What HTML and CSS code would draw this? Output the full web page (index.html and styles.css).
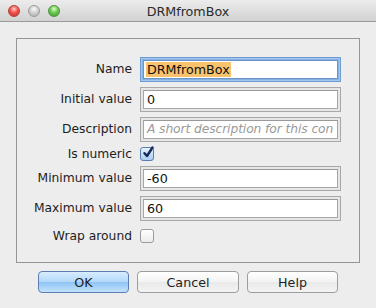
FILE: index.html
```html
<!DOCTYPE html>
<html lang="en">
<head>
  <meta charset="UTF-8" />
  <meta name="viewport" content="width=device-width, initial-scale=1.0" />
  <title>DRMfromBox</title>
  <link rel="stylesheet" href="styles.css">
</head>
<body>
  <div class="window">
    <div class="titlebar">
      <div class="lights">
        <span class="light red"></span>
        <span class="light gray"></span>
        <span class="light green"></span>
      </div>
      <div class="title">DRMfromBox</div>
      <div></div>
    </div>

    <div class="content">
      <div class="panel">
        <div class="form">
          <label class="label">Name</label>
          <div class="field focused"><div class="input"><span class="sel">DRMfromBox</span></div></div>

          <label class="label">Initial value</label>
          <div class="field"><div class="input">0</div></div>

          <label class="label">Description</label>
          <div class="field"><div class="input placeholder">A short description for this con</div></div>

          <label class="label check-label">Is numeric</label>
          <div class="check-cell">
            <span class="checkbox checked">
              <svg width="14" height="14" viewBox="0 0 14 14"><path d="M3.5 7.2 L6 10 L11.5 1.5" fill="none" stroke="#14285a" stroke-width="2.4" stroke-linecap="round" stroke-linejoin="round"/></svg>
            </span>
          </div>

          <label class="label">Minimum value</label>
          <div class="field"><div class="input">-60</div></div>

          <label class="label">Maximum value</label>
          <div class="field"><div class="input">60</div></div>

          <label class="label check-label wrap">Wrap around</label>
          <div class="check-cell wrap"><span class="checkbox"></span></div>
        </div>
      </div>

      <div class="buttons">
        <button class="btn default">OK</button>
        <button class="btn cancel">Cancel</button>
        <button class="btn">Help</button>
      </div>
    </div>
  </div>
</body>
</html>
```
FILE: styles.css
```css
body { margin: 0; background: #ededed; font-family: "DejaVu Sans", "Liberation Sans", sans-serif; font-size: 12.3px; color: #1e1e1e; }
.window { width: 376px; height: 308px; overflow: hidden; }

.titlebar { height: 21px; border-bottom: 1px solid #9a9a9a; background: linear-gradient(#ececec, #d2d2d2); display: grid; grid-template-columns: 1fr auto 1fr; align-items: center; }
.lights { display: flex; gap: 8px; padding-left: 8px; padding-top: 1px; }
.light { width: 12px; height: 12px; border-radius: 50%; box-sizing: border-box; }
.light.red { background: radial-gradient(circle at 50% 30%, #ffd0cc 0, #f2514b 45%, #c9302a 100%); border: 1px solid #b0433e; }
.light.gray { background: radial-gradient(circle at 50% 30%, #fafafa 0, #d2d2d2 45%, #a9a9a9 100%); border: 1px solid #9c9c9c; }
.light.green { background: radial-gradient(circle at 50% 30%, #e0ffcf 0, #6cc94f 45%, #3e9a2c 100%); border: 1px solid #4d913c; }
.title { font-size: 12.7px; color: #2b2b2b; padding-top: 1px; }

.content { padding: 16px 16px 0 16px; }
.panel { height: 223px; border: 1px solid #959595; }
.form { display: grid; grid-template-columns: 115px 201px; column-gap: 8px; row-gap: 5px; padding-top: 18px; }

.label { text-align: right; line-height: 25px; height: 25px; white-space: nowrap; }
.check-label { line-height: 14px; height: 14px; }

.field { height: 25px; box-sizing: border-box; border: 1px solid #a8a8a8; padding: 2px; background: #e6e6e6; }
.input { height: 100%; box-sizing: border-box; border: 1px solid #a6a6a6; border-top-color: #999; background: #fff; padding-left: 3px; font-size: 12.7px; line-height: 17px; white-space: nowrap; overflow: hidden; color: #111; }
.field.focused { border: 1px solid #6f9bd3; background: #86b1e3; box-shadow: inset 0 0 0 1px #a5c6ee; }
.field.focused .input { border-color: #6b93c6; }
.sel { background: #f8c36c; padding: 0 1px; margin-left: -1px; }
.placeholder { font-style: italic; color: #9a9a9a; font-size: 12.3px; letter-spacing: -0.1px; }

.check-cell { height: 14px; }
.checkbox { display: block; width: 14px; height: 14px; box-sizing: border-box; border: 1px solid #9b9b9b; border-radius: 3px; background: linear-gradient(#ffffff, #ececec); }
.checkbox.checked { border-color: #5b7eb0; background: linear-gradient(#e8f2fd, #a9cdf2); }
.checkbox svg { display: block; margin: -2px 0 0 0; }
.wrap { margin-top: 3px; }

.buttons { display: flex; justify-content: center; gap: 8px; margin-top: 8px; }
.btn { width: 91px; height: 22px; box-sizing: border-box; border: 1px solid #9d9d9d; border-radius: 4px; background: linear-gradient(#ffffff, #f3f3f3 50%, #e9e9e9 51%, #f4f4f4); font-family: "DejaVu Sans", "Liberation Sans", sans-serif; font-size: 12.7px; color: #1e1e1e; padding: 0; }
.btn.cancel { width: 102px; }
.btn.default { border-color: #5d7db0; background: linear-gradient(#d8ecfd, #b3d8fa 50%, #8fc4f5 51%, #c3e2fd); }
```
